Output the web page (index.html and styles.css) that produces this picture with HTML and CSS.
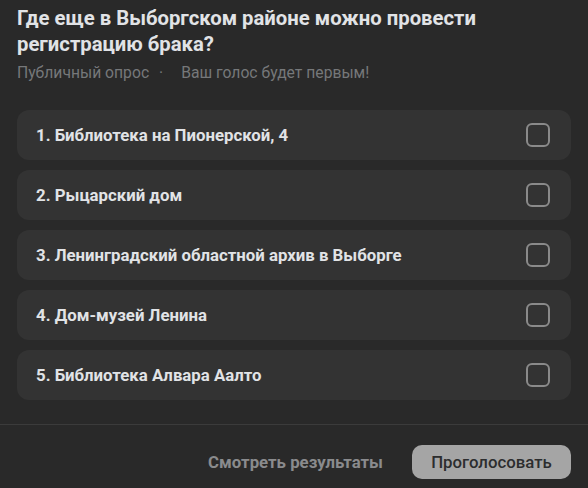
FILE: index.html
```html
<!DOCTYPE html>
<html lang="ru">
<head>
    <meta charset="UTF-8">
    <title>Опрос</title>
    <link rel="stylesheet" href="styles.css">
</head>
<body>
<div class="poll">
    <header class="poll-head">
        <h1>Где еще в Выборгском районе можно провести регистрацию брака?</h1>
        <p class="poll-meta"><span>Публичный опрос</span><span class="dot">·</span><span>Ваш голос будет первым!</span></p>
    </header>
    <div class="options">
        <label class="option"><span>1. Библиотека на Пионерской, 4</span><i class="check"></i></label>
        <label class="option"><span>2. Рыцарский дом</span><i class="check"></i></label>
        <label class="option"><span>3. Ленинградский областной архив в Выборге</span><i class="check"></i></label>
        <label class="option"><span>4. Дом-музей Ленина</span><i class="check"></i></label>
        <label class="option"><span>5. Библиотека Алвара Аалто</span><i class="check"></i></label>
    </div>
    <footer class="poll-foot">
        <button class="btn-link">Смотреть результаты</button>
        <button class="btn-vote">Проголосовать</button>
    </footer>
</div>
</body>
</html>
```

FILE: styles.css
```css
body {
    margin: 0;
    background: #292929;
    font-family: Roboto, "Liberation Sans", sans-serif;
    color: #e1e3e6;
}
.poll-head {
    padding: 5px 17px 0;
}
h1 {
    margin: 0;
    font-size: 20.3px;
    line-height: 26px;
    font-weight: 700;
    color: #e1e3e6;
}
.poll-meta {
    margin: 6px 0 0;
    font-size: 15.7px;
    line-height: 20px;
    color: #76787a;
}
.dot {
    margin: 0 18px 0 10px;
}
.options {
    display: flex;
    flex-direction: column;
    gap: 10px;
    padding: 27px 17px 24px;
}
.option {
    display: flex;
    align-items: center;
    justify-content: space-between;
    height: 50px;
    padding: 0 21px 0 19px;
    background: #333333;
    border-radius: 12px;
    font-size: 16.8px;
    font-weight: 700;
}
.check {
    width: 20px;
    height: 20px;
    border: 2px solid #8a8a8a;
    border-radius: 6px;
}
.poll-foot {
    display: flex;
    justify-content: flex-end;
    align-items: center;
    gap: 29px;
    border-top: 1px solid #3b3b3b;
    padding: 20px 17px 9px;
}
button {
    font-family: inherit;
    font-size: 16.8px;
    font-weight: 500;
    border: none;
    cursor: pointer;
}
.btn-link {
    background: none;
    color: #8a8b8d;
    padding: 0;
    font-weight: 700;
}
.btn-vote {
    background: #a5a5a5;
    color: #2c2d2e;
    height: 34px;
    width: 159px;
    border-radius: 10px;
}
```
